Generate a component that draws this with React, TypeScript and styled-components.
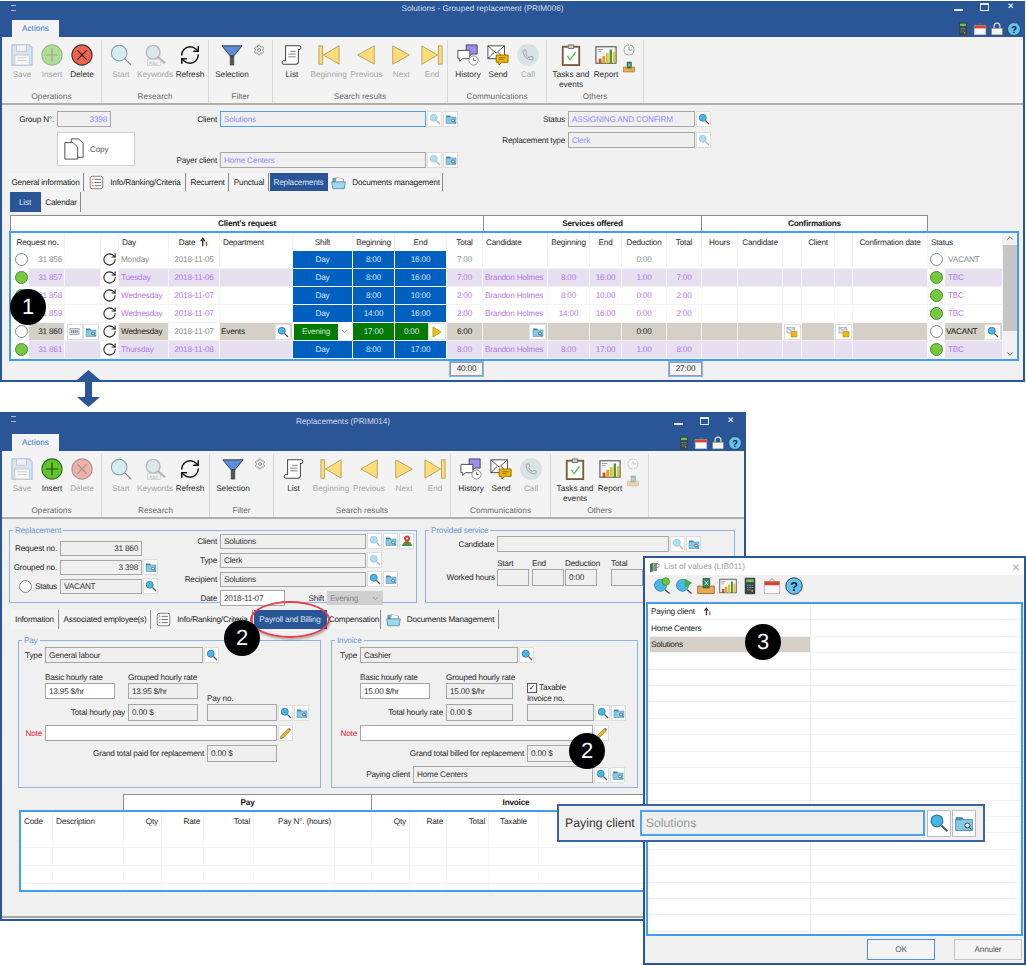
import React, { ReactNode } from "react";
import styled, { createGlobalStyle } from "styled-components";
import { ChevronDown, ChevronUp, Phone, RefreshCw, RotateCw, Settings } from "lucide-react";

const Global = createGlobalStyle`
  html, body { margin: 0; padding: 0; background: #fff; }
  body {
    font-family: "Liberation Sans", Arial, sans-serif;
    font-size: 8.2px;
    letter-spacing: -0.2px;
    text-rendering: geometricPrecision;
    color: #222;
  }
  * { box-sizing: border-box; }
`;

/* ---------- icons ---------- */
type IconProps = { s?: number; off?: boolean };

const Svg = ({ s = 14, off, children }: IconProps & { children: ReactNode }) => (
  <svg width={s} height={s} viewBox="0 0 24 24" opacity={off ? 0.45 : 1} style={{ flexShrink: 0 }}>
    {children}
  </svg>
);

const SearchIcon = (p: IconProps) => (
  <Svg {...p}>
    <circle cx="9.5" cy="9.5" r="7" fill="#48b6e6" stroke="#2c7d9e" strokeWidth="1.6" />
    <path d="M15 15l7 7" stroke="#555" strokeWidth="2.4" />
  </Svg>
);
const FolderIcon = (p: IconProps) => (
  <Svg {...p}>
    <path d="M2 5h8l2 3h10v4H2z" fill="#3f88a8" />
    <path d="M2 8h20v13H2z" fill="#86c7e6" stroke="#3f88a8" />
    <circle cx="16" cy="15" r="3" fill="#dff1f9" stroke="#345" strokeWidth="1.2" />
    <path d="M18 17l3 3" stroke="#345" strokeWidth="1.4" />
  </Svg>
);
const SaveIcon = (p: IconProps) => (
  <Svg {...p}>
    <path d="M1 1h19l3 3v19H1z" fill="#bcd0ec" stroke="#5f86c0" strokeWidth="1.2" />
    <path d="M6 1h11v7H6z" fill="#eef2f8" stroke="#7c8ea8" />
    <path d="M4 12h16v11H4z" fill="#fff" stroke="#7c8ea8" />
    <path d="M7 15h10M7 18h10" stroke="#99a" />
  </Svg>
);
const InsertIcon = (p: IconProps) => (
  <Svg {...p}>
    <circle cx="12" cy="12" r="11" fill="#62c42c" stroke="#2a6e18" strokeWidth="1.2" />
    <path d="M12 5v14M5 12h14" stroke="#1d4d10" strokeWidth="1.3" />
  </Svg>
);
const DeleteIcon = (p: IconProps) => (
  <Svg {...p}>
    <circle cx="12" cy="12" r="11" fill="#f4604c" stroke="#333" strokeWidth="1.2" />
    <path d="M7 7l10 10M17 7L7 17" stroke="#222" strokeWidth="1.3" />
  </Svg>
);
const StartIcon = (p: IconProps) => (
  <Svg {...p}>
    <circle cx="10" cy="10" r="8.5" fill="#d6ebf2" stroke="#8aa0a8" strokeWidth="1.2" />
    <path d="M16 16l7 7" stroke="#888" strokeWidth="1.4" />
  </Svg>
);
const KeywordsIcon = (p: IconProps) => (
  <Svg {...p}>
    <circle cx="10" cy="9" r="7.5" fill="#bcdbe8" stroke="#777" strokeWidth="1.6" />
    <path d="M15 14l8 7" stroke="#666" strokeWidth="2.4" />
    <rect x="4" y="17" width="14" height="6.5" fill="#eee" stroke="#999" strokeWidth=".7" />
    <text x="5.5" y="22.6" fontSize="5.5" fill="#666" fontFamily="Liberation Sans">Abc</text>
  </Svg>
);
const FunnelIcon = (p: IconProps) => (
  <Svg {...p}>
    <path d="M1 2h22l-9 11H10z" fill="#5b8ed8" stroke="#333" strokeWidth="1" />
    <path d="M10 13h4v10h-4z" fill="#555" stroke="#333" strokeWidth=".6" />
  </Svg>
);
const ListIcon = (p: IconProps) => (
  <Svg {...p}>
    <path d="M5 2h15c2 0 2.6 3 .4 4H19v13c0 2-1 3-3 3H3c-2 0-2.6-3-.6-3.6L5 18z" fill="#fff" stroke="#444" strokeWidth="1.1" />
    <path d="M10 8h6M8 11h8M8 14h8" stroke="#777" />
  </Svg>
);
const tri = { fill: "#ffdc78", stroke: "#b5a060", strokeWidth: 1 };
const BeginningIcon = (p: IconProps) => (
  <Svg {...p}>
    <rect x="1" y="2" width="4" height="20" {...tri} />
    <path d="M23 2v20L6 12z" {...tri} />
  </Svg>
);
const PreviousIcon = (p: IconProps) => (
  <Svg {...p}>
    <path d="M21 2v20L3 12z" {...tri} />
  </Svg>
);
const NextIcon = (p: IconProps) => (
  <Svg {...p}>
    <path d="M3 2v20l18-10z" {...tri} />
  </Svg>
);
const EndIcon = (p: IconProps) => (
  <Svg {...p}>
    <rect x="19" y="2" width="4" height="20" {...tri} />
    <path d="M1 2v20l17-10z" {...tri} />
  </Svg>
);
const HistoryIcon = (p: IconProps) => (
  <Svg {...p}>
    <path d="M10 1h12v10h-6l-3 3v-3h-3z" fill="#9c8cf0" stroke="#444" />
    <path d="M1 7h13v9H6l-3 3v-3H1z" fill="#fff" stroke="#444" />
    <circle cx="18" cy="18" r="5" fill="#fff" stroke="#888" />
    <path d="M18 15v3h2.5" stroke="#666" fill="none" />
  </Svg>
);
const SendIcon = (p: IconProps) => (
  <Svg {...p}>
    <rect x="1" y="2" width="18" height="14" fill="#fff" stroke="#444" />
    <path d="M1 2l9 8 9-8M1 16l7-7M19 16l-7-7" stroke="#444" fill="none" />
    <path d="M10 12h13v8h-7l-3 3v-3h-3z" fill="#f2b705" stroke="#8a6a00" />
    <path d="M13 15h7M13 17h5" stroke="#8a6a00" />
  </Svg>
);
const TasksIcon = (p: IconProps) => (
  <Svg {...p}>
    <rect x="3" y="3" width="18" height="20" fill="#fff" stroke="#7a5a3a" strokeWidth="2" />
    <path d="M9 1h6v4H9z" fill="#ccc" stroke="#666" />
    <path d="M8 13l3 4 6-8" stroke="#5cc24a" strokeWidth="1.5" fill="none" />
  </Svg>
);
const ReportIcon = (p: IconProps) => (
  <Svg {...p}>
    <rect x="1" y="3" width="22" height="18" fill="#f4f4f4" stroke="#555" strokeWidth="1.2" />
    <path d="M3 6h6M3 8h4" stroke="#999" />
    <rect x="4" y="16" width="3" height="5" fill="#c8502a" />
    <rect x="8" y="13" width="3" height="8" fill="#e59a2a" />
    <rect x="12" y="10" width="3" height="11" fill="#e5c12a" />
    <rect x="16" y="6" width="2.5" height="15" fill="#3d9a3d" />
    <rect x="19.5" y="9" width="2.5" height="12" fill="#e5c12a" />
  </Svg>
);
const ClockIcon = (p: IconProps) => (
  <Svg {...p}>
    <circle cx="12" cy="12" r="10" fill="#f6f6f6" stroke="#777" strokeDasharray="14 2" strokeWidth="1.4" />
    <path d="M12 6v6h6" stroke="#666" fill="none" strokeWidth="1.4" />
  </Svg>
);
const ExcelIcon = (p: IconProps) => (
  <Svg {...p}>
    <path d="M8 2h9v12H8z" fill="#2e8b57" stroke="#1c5a38" />
    <path d="M10 5l5 6M15 5l-5 6" stroke="#fff" />
    <path d="M1 12h5l2 3h8l2-3h5v10H1z" fill="#f0a850" stroke="#8a5a20" />
  </Svg>
);
const CalcIcon = (p: IconProps) => (
  <Svg {...p}>
    <rect x="5" y="1" width="14" height="22" rx="1" fill="#34484a" />
    <rect x="7" y="3" width="10" height="4" fill="#6fc24a" />
    <path d="M8 11h2M11 11h2M14 11h2M8 14h2M11 14h2M14 14h2M8 17h2M11 17h2" stroke="#8a9a9a" strokeWidth="1.4" />
    <path d="M14 17h2v3h-2z" fill="#e58a2a" />
  </Svg>
);
const CalendarIcon = (p: IconProps) => (
  <Svg {...p}>
    <rect x="2" y="6" width="20" height="16" fill="#f8f8f8" stroke="#aaa" />
    <path d="M2 6h20v5H2z" fill="#d9432f" />
    <path d="M8 6l4-4 4 4" stroke="#777" fill="none" />
  </Svg>
);
const LockIcon = (p: IconProps) => (
  <Svg {...p}>
    <path d="M7 11V7a5 5 0 0110 0v4" stroke="#ddd" strokeWidth="2" fill="none" />
    <rect x="3" y="11" width="18" height="11" fill="#f4f4f4" stroke="#b09a60" />
  </Svg>
);
const HelpIcon = (p: IconProps) => (
  <Svg {...p}>
    <circle cx="12" cy="12" r="11" fill="#63c3ee" stroke="#234" strokeWidth="1.2" />
    <text x="12" y="18" fontSize="17" fontWeight="700" textAnchor="middle" fill="#123" fontFamily="Liberation Sans">?</text>
  </Svg>
);
const SortIcon = (p: IconProps) => (
  <Svg {...p}>
    <path d="M9 22V7M4 10l5-7 5 7" stroke="#222" strokeWidth="3" fill="none" />
    <path d="M18 12v10" stroke="#d33" strokeWidth="3" />
  </Svg>
);
const CopyIcon = (p: IconProps) => (
  <Svg {...p}>
    <path d="M9 1h8l5 5v15H9z" fill="#fff" stroke="#444" />
    <path d="M2 5h9l5 5v13H2z" fill="#fff" stroke="#444" />
  </Svg>
);
const InfoIcon = (p: IconProps) => (
  <Svg {...p}>
    <rect x="2" y="2" width="20" height="20" rx="3" fill="#fafafa" stroke="#777" strokeWidth="1.4" />
    <path d="M5 7h2M5 12h2M5 17h2" stroke="#e08030" strokeWidth="2" />
    <path d="M9 7h10M9 12h10M9 17h10" stroke="#777" strokeWidth="1.6" />
  </Svg>
);
const DocsIcon = (p: IconProps) => (
  <Svg {...p}>
    <path d="M3 11V5h7l2 2h8v4z" fill="#5fa8c8" stroke="#3f6f88" strokeWidth=".8" />
    <path d="M7 11l2-7 10 2 1 5z" fill="#fff" stroke="#999" strokeWidth=".8" />
    <path d="M1 11h22l-2 11H3z" fill="#9ed6ee" stroke="#3f6f88" />
  </Svg>
);
const PinIcon = (p: IconProps) => (
  <Svg {...p}>
    <path d="M1 22l5-8h12l5 8z" fill="#3d9a3d" />
    <path d="M12 18C8 12 6 10 6 7a6 6 0 0112 0c0 3-2 5-6 11z" fill="#d9432f" />
    <circle cx="12" cy="7" r="2" fill="#fff" />
  </Svg>
);
const PencilIcon = (p: IconProps) => (
  <Svg {...p}>
    <path d="M4 16L17 3l4 4L8 20l-6 2z" fill="#e5b82a" stroke="#6a5a20" />
    <path d="M17 3l4 4 1-2-3-3z" fill="#d9432f" />
  </Svg>
);
const EnvLockIcon = (p: IconProps) => (
  <Svg {...p}>
    <rect x="2" y="3" width="15" height="11" fill="#dfe4ea" stroke="#889" />
    <path d="M2 3l7.500 6L17 3" stroke="#889" fill="none" />
    <rect x="10" y="11" width="12" height="11" rx="1" fill="#f2b705" stroke="#a07a00" />
  </Svg>
);
const CardIcon = (p: IconProps) => (
  <Svg {...p}>
    <rect x="2" y="5" width="20" height="14" fill="#d8dce8" stroke="#778" />
    <path d="M6 9v6M10 9v6M14 9v6M18 9v6" stroke="#556" strokeWidth="1.6" />
  </Svg>
);
const PlusGlassIcon = (p: IconProps) => (
  <Svg {...p}>
    <circle cx="10" cy="11" r="8" fill="#48b6e6" stroke="#2c7d9e" />
    <path d="M16 17l6 5" stroke="#444" strokeWidth="1.6" />
    <circle cx="17" cy="6" r="5" fill="#6cc53a" stroke="#3d8a20" />
  </Svg>
);
const FlagGlassIcon = (p: IconProps) => (
  <Svg {...p}>
    <circle cx="10" cy="11" r="8" fill="#48b6e6" stroke="#2c7d9e" />
    <path d="M16 17l6 5" stroke="#444" strokeWidth="1.6" />
    <path d="M13 2l10 6-10 6z" fill="#3fae3f" />
  </Svg>
);
const BooksIcon = (p: IconProps) => (
  <Svg {...p}>
    <path d="M2 6l7-3v17l-7 3z" fill="#3d7a5a" />
    <path d="M10 4h6v16h-6z" fill="#888" />
    <path d="M16 5c6 0 6 8 0 8" stroke="#888" strokeWidth="2" fill="none" />
  </Svg>
);
const PlayIcon = () => (
  <svg width="10" height="12" viewBox="0 0 10 12">
    <path d="M1 1v10l8-5z" fill="#f4c20d" stroke="#a08000" strokeWidth=".7" />
  </svg>
);

/* ---------- window chrome ---------- */
const Desktop = styled.div`
  position: relative;
  width: 1026px;
  height: 966px;
  overflow: hidden;
  background: #fff;
`;

const Win = styled.section<{ $x: number; $y: number; $w: number; $h: number; $z?: number }>`
  position: absolute;
  left: ${(p) => p.$x}px;
  top: ${(p) => p.$y}px;
  width: ${(p) => p.$w}px;
  height: ${(p) => p.$h}px;
  z-index: ${(p) => p.$z ?? 1};
  border: 2px solid #2a5596;
  display: flex;
  flex-direction: column;
  background: #f0f0f0;
  overflow: hidden;
`;

const TitleBar = styled.header<{ $h: number }>`
  position: relative;
  height: ${(p) => p.$h}px;
  background: #2a5596;
  display: flex;
  flex-direction: column;
  flex-shrink: 0;
`;

const TitleText = styled.div<{ $h: number }>`
  height: ${(p) => p.$h}px;
  line-height: ${(p) => p.$h}px;
  padding-right: 60px;
  text-align: center;
  letter-spacing: 0;
  color: #d4deee;
`;

const TitleTabs = styled.div`
  margin-top: auto;
  display: flex;
  align-items: flex-end;
  justify-content: space-between;
  padding: 0 2px 0 10px;
`;

const ActionsTab = styled.div`
  width: 47px;
  height: 17px;
  line-height: 17px;
  text-align: center;
  letter-spacing: 0;
  background: #f3f3f3;
  color: #2f7ad8;
`;

const QuickIcons = styled.div`
  display: flex;
  gap: 3px;
  margin-bottom: 1px;
`;

const WinButtons = styled.div<{ $top: number; $right: number }>`
  position: absolute;
  right: ${(p) => p.$right}px;
  top: ${(p) => p.$top}px;
  display: flex;
  gap: 17px;
  height: 7px;
  align-items: center;
`;

const WinGlyph = styled.span<{ $kind: "min" | "max" | "close" }>`
  width: 9px;
  height: 8px;
  position: relative;
  display: block;
  ${(p) => p.$kind === "min" && "border-bottom: 2px solid #e4eaf4; height: 6px; margin-top: 3px;"}
  ${(p) => p.$kind === "max" && "border: 1px solid #e4eaf4; border-top-width: 2px;"}
  ${(p) => p.$kind === "close" && "color: #e4eaf4; font-size: 10px; line-height: 8px; font-weight: 700; text-align: center;"}
`;

const TitleBars = styled.div`
  position: absolute;
  left: 9px;
  top: 2px;
  width: 5px;
  height: 6px;
  border-top: 1px solid #a9bad4;
  border-bottom: 1px solid #a9bad4;
`;

type ChromeProps = { title: string; titleH: number; textH: number; btnTop: number; btnRight: number };

const Chrome = ({ title, titleH, textH, btnTop, btnRight }: ChromeProps) => (
  <TitleBar $h={titleH}>
    <TitleBars />
    <TitleText $h={textH}>{title}</TitleText>
    <WinButtons $top={btnTop} $right={btnRight}>
      <WinGlyph $kind="min" />
      <WinGlyph $kind="max" />
      <WinGlyph $kind="close">×</WinGlyph>
    </WinButtons>
    <TitleTabs>
      <ActionsTab>Actions</ActionsTab>
      <QuickIcons>
        <CalcIcon s={14} />
        <CalendarIcon s={14} />
        <LockIcon s={14} />
        <HelpIcon s={14} />
      </QuickIcons>
    </TitleTabs>
  </TitleBar>
);

/* ---------- ribbon ---------- */
const RibbonBar = styled.div`
  height: 68px;
  flex-shrink: 0;
  display: flex;
  letter-spacing: 0;
  background: #f3f3f3;
  border-bottom: 2px solid #aeaeae;
`;

const Group = styled.div<{ $w: number; $pad: number }>`
  width: ${(p) => p.$w}px;
  height: 63px;
  margin-top: 3px;
  padding-left: ${(p) => p.$pad}px;
  border-right: 1px solid #d9d9d9;
  display: flex;
  flex-direction: column;
`;

const GroupItems = styled.div`
  height: 51px;
  padding-top: 4px;
  display: flex;
`;

const GroupTitle = styled.div<{ $pad: number }>`
  margin-left: -${(p) => p.$pad}px;
  text-align: center;
  height: 12px;
  line-height: 12px;
  color: #6b6b6b;
`;

const RibbonBtn = styled.div<{ $w: number; $off?: boolean }>`
  width: ${(p) => p.$w}px;
  display: flex;
  flex-direction: column;
  align-items: center;
  text-align: center;
  white-space: nowrap;
  color: ${(p) => (p.$off ? "#a6a6a6" : "#2c2c2c")};
  line-height: 9.5px;
  & > span {
    margin-top: 4px;
  }
`;

const SmallCol = styled.div<{ $ml?: number }>`
  width: 16px;
  margin-left: ${(p) => p.$ml ?? 0}px;
  display: flex;
  flex-direction: column;
  align-items: center;
  gap: 5px;
  color: #6f7b80;
`;

const CallBadge = styled.div`
  width: 22px;
  height: 22px;
  border-radius: 50%;
  background: #d8e4e4;
  display: flex;
  align-items: center;
  justify-content: center;
`;

const Ribbon = ({ second }: { second?: boolean }) => {
  const b = (label: ReactNode, icon: ReactNode, w: number, off?: boolean) => (
    <RibbonBtn $w={w} $off={off}>
      {icon}
      <span>{label}</span>
    </RibbonBtn>
  );
  return (
    <RibbonBar>
      <Group $w={100} $pad={5}>
        <GroupItems>
          {b("Save", <SaveIcon s={22} off />, 30, true)}
          {b("Insert", <InsertIcon s={22} off={!second} />, 30, !second)}
          {b("Delete", <DeleteIcon s={22} off={second} />, 30, second)}
        </GroupItems>
        <GroupTitle $pad={5}>Operations</GroupTitle>
      </Group>
      <Group $w={second ? 108 : 107} $pad={2}>
        <GroupItems>
          {b("Start", <StartIcon s={22} />, 34, true)}
          {b("Keywords", <KeywordsIcon s={22} off />, 34, true)}
          {b("Refresh", <RefreshCw size={22} strokeWidth={1.6} color="#111" />, 36)}
        </GroupItems>
        <GroupTitle $pad={2}>Research</GroupTitle>
      </Group>
      <Group $w={64} $pad={0}>
        <GroupItems>
          {b("Selection", <FunnelIcon s={22} />, 46)}
          <SmallCol $ml={-4}>
            <Settings size={12} strokeWidth={1.6} />
          </SmallCol>
        </GroupItems>
        <GroupTitle $pad={0}>Filter</GroupTitle>
      </Group>
      <Group $w={second ? 177 : 175} $pad={1}>
        <GroupItems>
          {b("List", <ListIcon s={22} />, second ? 37 : 36)}
          {b("Beginning", <BeginningIcon s={22} />, 38, true)}
          {b("Previous", <PreviousIcon s={22} />, 38, true)}
          {b("Next", <NextIcon s={22} />, 32, true)}
          {b("End", <EndIcon s={22} />, 30, true)}
        </GroupItems>
        <GroupTitle $pad={1}>Search results</GroupTitle>
      </Group>
      <Group $w={second ? 100 : 99} $pad={5}>
        <GroupItems>
          {b("History", <HistoryIcon s={22} />, 30)}
          {b("Send", <SendIcon s={22} />, 30)}
          {b("Call", <CallBadge><Phone size={12} strokeWidth={1.4} color="#7c8c8c" /></CallBadge>, 30, true)}
        </GroupItems>
        <GroupTitle $pad={5}>Communications</GroupTitle>
      </Group>
      <Group $w={second ? 98 : 97} $pad={4}>
        <GroupItems>
          {b(<>Tasks and<br />events</>, <TasksIcon s={22} />, 40)}
          {b("Report", <ReportIcon s={22} />, 30)}
          <SmallCol>
            <ClockIcon s={12} off={second} />
            <ExcelIcon s={12} off={second} />
          </SmallCol>
        </GroupItems>
        <GroupTitle $pad={4}>Others</GroupTitle>
      </Group>
    </RibbonBar>
  );
};

/* ---------- form parts ---------- */
const Body = styled.div<{ $top: number }>`
  flex: 1;
  padding-top: ${(p) => p.$top}px;
  display: flex;
  flex-direction: column;
  overflow: hidden;
  min-height: 0;
`;

const FormRow = styled.div`
  display: flex;
  align-items: flex-start;
`;

const Col = styled.div<{ $w?: number }>`
  ${(p) => p.$w && `width: ${p.$w}px;`}
  display: flex;
  flex-direction: column;
  flex-shrink: 0;
`;

const Line = styled.div<{ $mt?: number; $ml?: number; $gap?: number }>`
  display: flex;
  align-items: center;
  margin-top: ${(p) => p.$mt ?? 0}px;
  margin-left: ${(p) => p.$ml ?? 0}px;
  gap: ${(p) => p.$gap ?? 1}px;
`;

const Lbl = styled.label<{ $w: number; $red?: boolean }>`
  width: ${(p) => p.$w}px;
  margin-right: 2px;
  text-align: right;
  white-space: nowrap;
  flex-shrink: 0;
  color: ${(p) => (p.$red ? "#f0203a" : "#2a2a2a")};
`;

const Fld = styled.div<{ $w: number; $h?: number; $white?: boolean; $focus?: boolean; $ink?: string; $right?: boolean }>`
  width: ${(p) => p.$w}px;
  height: ${(p) => p.$h ?? 16}px;
  flex-shrink: 0;
  padding: 0 3px;
  display: flex;
  align-items: center;
  justify-content: ${(p) => (p.$right ? "flex-end" : "flex-start")};
  white-space: nowrap;
  overflow: hidden;
  background: ${(p) => (p.$white ? "#fff" : "#efefef")};
  border: ${(p) => (p.$focus ? "1.6px solid #4aa3f0" : "1.6px solid #a6a6a6")};
  color: ${(p) => p.$ink ?? "#333"};
`;

const IconBtn = styled.div<{ $w?: number; $h?: number }>`
  width: ${(p) => p.$w ?? 15}px;
  height: ${(p) => p.$h ?? 16}px;
  flex-shrink: 0;
  display: flex;
  align-items: center;
  justify-content: center;
  background: #fff;
  border: 1px solid #ddd;
`;

const Find = ({ off, mute }: { off?: boolean; mute?: boolean }) => (
  <IconBtn>
    <SearchIcon s={12} off={off || mute} />
  </IconBtn>
);
const Browse = () => (
  <IconBtn>
    <FolderIcon s={12} />
  </IconBtn>
);

const CopyBtn = styled.div`
  width: 78px;
  height: 34px;
  margin-top: 5px;
  margin-left: 55px;
  display: flex;
  align-items: center;
  gap: 5px;
  padding-left: 5px;
  background: #fff;
  border: 1px solid #d0d0d0;
  color: #555;
`;

const Tabs = styled.nav<{ $mt?: number; $ml: number; $h: number }>`
  display: flex;
  gap: 1px;
  margin-top: ${(p) => p.$mt ?? 0}px;
  margin-left: ${(p) => p.$ml}px;
  height: ${(p) => p.$h}px;
  flex-shrink: 0;
`;

const Tab = styled.div<{ $w: number; $on?: boolean }>`
  width: ${(p) => p.$w}px;
  display: flex;
  align-items: center;
  justify-content: center;
  gap: 6px;
  white-space: nowrap;
  background: ${(p) => (p.$on ? "#2a5596" : "#f4f4f4")};
  color: ${(p) => (p.$on ? "#dde6f4" : "#222")};
  border-right: 1px solid ${(p) => (p.$on ? "#2a5596" : "#8a8a8a")};
`;

/* ---------- tables ---------- */
const GroupHead = styled.div<{ $ml: number; $cols: string }>`
  display: grid;
  grid-template-columns: ${(p) => p.$cols};
  margin-left: ${(p) => p.$ml}px;
  height: 16px;
  flex-shrink: 0;
`;

const GroupCell = styled.div`
  background: #fff;
  border: 1px solid #8c8c8c;
  border-bottom: none;
  border-right-width: 0;
  &:last-child {
    border-right-width: 1px;
  }
  font-weight: 700;
  text-align: center;
  line-height: 15px;
  color: #111;
`;

const TableBox = styled.div<{ $ml: number; $w: number; $h: number }>`
  margin-left: ${(p) => p.$ml}px;
  width: ${(p) => p.$w}px;
  height: ${(p) => p.$h}px;
  flex-shrink: 0;
  border: 2px solid #429df0;
  background: #fff;
  display: flex;
  overflow: hidden;
`;

const Rows = styled.div<{ $cols: string }>`
  display: grid;
  grid-template-columns: ${(p) => p.$cols};
  grid-auto-rows: 18px;
  align-content: start;
`;

const Head = styled.div<{ $al?: string; $span?: number }>`
  ${(p) => p.$span && `grid-column: span ${p.$span};`}
  display: flex;
  align-items: center;
  justify-content: ${(p) => p.$al ?? "center"};
  gap: 4px;
  padding: 0 3px;
  white-space: nowrap;
  border-right: 1px solid #f0f0f0;
  color: #2a2a2a;
`;

const Cell = styled.div<{ $bg?: string; $fg?: string; $al?: string; $pr?: number }>`
  display: flex;
  align-items: center;
  justify-content: ${(p) => p.$al ?? "center"};
  padding: 0 ${(p) => p.$pr ?? 2}px;
  white-space: nowrap;
  overflow: hidden;
  background: ${(p) => p.$bg ?? "#fff"};
  color: ${(p) => p.$fg ?? "#8a8a8a"};
  border-right: 1px solid #f6f6f6;
  border-bottom: 1px solid #f3f3f3;
`;

const TimeCell = styled(Cell)`
  background: ${(p) => p.$bg ?? "#0060c0"};
  color: #d8e6f8;
  border: 1px solid #fff;
  border-width: 0 1px 1px 0;
`;

const Dot = styled.span<{ $on?: boolean }>`
  width: 13px;
  height: 13px;
  border-radius: 50%;
  display: block;
  flex-shrink: 0;
  background: ${(p) => (p.$on ? "#74c93c" : "#fff")};
  border: 1px solid ${(p) => (p.$on ? "#4c8a3c" : "#888")};
`;

const Scroll = styled.div`
  width: 14px;
  flex-shrink: 0;
  background: #f1f1f1;
  display: flex;
  flex-direction: column;
  align-items: center;
  color: #444;
`;

const Thumb = styled.div`
  width: 100%;
  height: 86px;
  margin-top: 2px;
  margin-bottom: auto;
  background: #c6c6c6;
`;

const SumRow = styled.div`
  height: 16px;
  flex-shrink: 0;
  display: flex;
  align-items: center;
`;

const SumBox = styled.div<{ $ml: number }>`
  width: 33px;
  height: 14px;
  margin-left: ${(p) => p.$ml}px;
  text-align: center;
  line-height: 11px;
  background: #f4f4f4;
  border: 1.6px solid #9a9a9a;
  outline: 1px solid #7fb8ee;
  color: #333;
`;

/* ---------- window one data ---------- */
const mainCols = "18px 36px 36px 18px 50px 51px 73px 60px 42px 52px 36px 65px 42px 32px 45px 35px 36px 45px 19px 33px 18px 75px 17px 58px";

type Tone = "grey" | "alt" | "plain";
const tones: Record<Tone, { bg: string; fg: string }> = {
  grey: { bg: "#fff", fg: "#8c8c8c" },
  alt: { bg: "#e6e0f1", fg: "#b57ae6" },
  plain: { bg: "#fff", fg: "#b57ae6" },
};

type Req = {
  tone: Tone; no: string; day: string; date: string; begin: string; end: string; total: string;
  cand?: string; b2?: string; e2?: string; ded: string; t2?: string; status: string;
};

const requests: Req[] = [
  { tone: "grey", no: "31 856", day: "Monday", date: "2018-11-05", begin: "8:00", end: "16:00", total: "7:00", ded: "0:00", status: "VACANT" },
  { tone: "alt", no: "31 857", day: "Tuesday", date: "2018-11-06", begin: "8:00", end: "16:00", total: "7:00", cand: "Brandon Holmes", b2: "8:00", e2: "16:00", ded: "1:00", t2: "7:00", status: "TBC" },
  { tone: "plain", no: "31 858", day: "Wednesday", date: "2018-11-07", begin: "8:00", end: "10:00", total: "2:00", cand: "Brandon Holmes", b2: "8:00", e2: "10:00", ded: "0:00", t2: "2:00", status: "TBC" },
  { tone: "plain", no: "31 859", day: "Wednesday", date: "2018-11-07", begin: "14:00", end: "16:00", total: "2:00", cand: "Brandon Holmes", b2: "14:00", e2: "16:00", ded: "0:00", t2: "2:00", status: "TBC" },
];
const lastRequest: Req = { tone: "alt", no: "31 861", day: "Thursday", date: "2018-11-08", begin: "8:00", end: "17:00", total: "8:00", cand: "Brandon Holmes", b2: "8:00", e2: "17:00", ded: "1:00", t2: "8:00", status: "TBC" };

const RowSpin = () => <RotateCw size={15} strokeWidth={1.7} color="#222" />;

const RequestRow = ({ r }: { r: Req }) => {
  const t = tones[r.tone];
  const c = (text?: string, al?: string) => (
    <Cell $bg={t.bg} $fg={t.fg} $al={al}>{text}</Cell>
  );
  const on = r.status !== "VACANT";
  return (
    <>
      <Cell $al="flex-end" $pr={0}><Dot $on={on} /></Cell>
      {c(r.no, "flex-end")}
      {c()}
      <Cell $pr={0}><RowSpin /></Cell>
      {c(r.day, "flex-start")}
      {c(r.date)}
      {c()}
      <TimeCell>Day</TimeCell>
      <TimeCell>{r.begin}</TimeCell>
      <TimeCell>{r.end}</TimeCell>
      {c(r.total)}
      {c(r.cand, "flex-start")}
      {c(r.b2)}
      {c(r.e2)}
      {c(r.ded)}
      {c(r.t2)}
      {c()}{c()}{c()}{c()}{c()}{c()}
      <Cell><Dot $on={on} /></Cell>
      <Cell $bg={t.bg} $fg={on ? "#b57ae6" : "#8c8c8c"} $al="flex-start" $pr={3}>{r.status}</Cell>
    </>
  );
};

const SEL = "#d4d0c8";

const SelectBox = styled.div`
  width: 100%;
  height: 16px;
  display: flex;
  align-items: center;
  background: #fff;
`;

const EveningTag = styled.div`
  flex: 1;
  height: 100%;
  text-align: center;
  line-height: 15px;
  background: #007a00;
  color: #cfe8cf;
`;

const EndTag = styled.div`
  flex: 1;
  height: 100%;
  text-align: center;
  line-height: 17px;
  background: #007a00;
  color: #d8e6f8;
`;

const SelectedRow = () => {
  const c = (text?: ReactNode, al?: string) => (
    <Cell $bg={SEL} $fg="#222" $al={al}>{text}</Cell>
  );
  return (
    <>
      <Cell $al="flex-end" $pr={0}><Dot /></Cell>
      {c("31 860", "flex-end")}
      <Cell $pr={1}>
        <IconBtn $w={16}><CardIcon s={11} /></IconBtn>
        <IconBtn $w={16}><FolderIcon s={12} /></IconBtn>
      </Cell>
      <Cell $pr={0}><RowSpin /></Cell>
      {c("Wednesday", "flex-start")}
      <Cell>2018-11-07</Cell>
      <Cell $bg={SEL} $fg="#222" $al="space-between" $pr={1}>
        Events
        <IconBtn $w={16}><SearchIcon s={12} /></IconBtn>
      </Cell>
      <Cell $pr={1}>
        <SelectBox>
          <EveningTag>Evening</EveningTag>
          <ChevronDown size={9} color="#555" style={{ margin: "0 2px" }} />
        </SelectBox>
      </Cell>
      <TimeCell $bg="#007a00">17:00</TimeCell>
      <TimeCell $bg="#fff" $al="space-between" $pr={0}>
        <EndTag>0:00</EndTag>
        <IconBtn $w={18} $h={17}><PlayIcon /></IconBtn>
      </TimeCell>
      {c("6:00")}
      <Cell $bg={SEL} $al="flex-end" $pr={1}>
        <IconBtn $w={17}><FolderIcon s={12} /></IconBtn>
      </Cell>
      {c()}{c()}
      {c("0:00")}
      {c()}{c()}{c()}
      <Cell $pr={1}><IconBtn $w={17}><EnvLockIcon s={12} /></IconBtn></Cell>
      {c()}
      <Cell $pr={1}><IconBtn $w={17}><EnvLockIcon s={12} /></IconBtn></Cell>
      {c()}
      <Cell><Dot /></Cell>
      <Cell $bg={SEL} $fg="#111" $al="space-between" $pr={1}>
        VACANT
        <IconBtn $w={17}><SearchIcon s={12} /></IconBtn>
      </Cell>
    </>
  );
};

const WindowOne = () => (
  <Win $x={0} $y={1} $w={1025} $h={381}>
    <Chrome title="Solutions - Grouped replacement (PRIM006)" titleH={34} textH={11} btnTop={0} btnRight={8} />
    <Ribbon />
    <Body $top={6}>
      <FormRow style={{ height: 62 }}>
        <Col $w={148}>
          <Line>
            <Lbl $w={52}>Group N°.</Lbl>
            <Fld $w={54} $right $ink="#8f8ff8">3398</Fld>
          </Line>
          <CopyBtn><CopyIcon s={22} />Copy</CopyBtn>
        </Col>
        <Col $w={320}>
          <Line>
            <Lbl $w={67}>Client</Lbl>
            <Fld $w={206} $focus $ink="#8f8ff8">Solutions</Fld>
            <Find mute />
            <Browse />
          </Line>
          <Line $mt={25}>
            <Lbl $w={67}>Payer client</Lbl>
            <Fld $w={206} $ink="#8f8ff8">Home Centers</Fld>
            <Find mute />
            <Browse />
          </Line>
        </Col>
        <Col>
          <Line>
            <Lbl $w={95}>Status</Lbl>
            <Fld $w={127} $ink="#8f8ff8">ASSIGNING AND CONFIRM</Fld>
            <Find />
          </Line>
          <Line $mt={5}>
            <Lbl $w={95}>Replacement type</Lbl>
            <Fld $w={127} $ink="#8f8ff8">Clerk</Fld>
            <Find mute />
          </Line>
        </Col>
      </FormRow>
      <Tabs $ml={6} $h={18}>
        <Tab $w={76}>General information</Tab>
        <Tab $w={101}><InfoIcon s={15} />Info/Ranking/Criteria</Tab>
        <Tab $w={42}>Recurrent</Tab>
        <Tab $w={39}>Punctual</Tab>
        <Tab $w={58} $on>Replacements</Tab>
        <Tab $w={114}><DocsIcon s={15} />Documents management</Tab>
      </Tabs>
      <Tabs $ml={8} $h={20} $mt={1}>
        <Tab $w={31} $on>List</Tab>
        <Tab $w={39}>Calendar</Tab>
      </Tabs>
      <GroupHead $ml={8} $cols="473px 218px 227px" style={{ marginTop: 3 }}>
        <GroupCell>Client's request</GroupCell>
        <GroupCell>Services offered</GroupCell>
        <GroupCell>Confirmations</GroupCell>
      </GroupHead>
      <TableBox $ml={7} $w={1010} $h={130}>
        <Rows $cols={mainCols}>
          <Head $span={2}>Request no.</Head>
          <Head /><Head />
          <Head $al="flex-start">Day</Head>
          <Head>Date <SortIcon s={10} /></Head>
          <Head $al="flex-start">Department</Head>
          <Head>Shift</Head>
          <Head>Beginning</Head>
          <Head>End</Head>
          <Head>Total</Head>
          <Head $al="flex-start">Candidate</Head>
          <Head>Beginning</Head>
          <Head>End</Head>
          <Head>Deduction</Head>
          <Head>Total</Head>
          <Head>Hours</Head>
          <Head>Candidate</Head>
          <Head />
          <Head>Client</Head>
          <Head />
          <Head>Confirmation date</Head>
          <Head $span={2} $al="flex-start">Status</Head>
          {requests.map((r) => <RequestRow key={r.no} r={r} />)}
          <SelectedRow />
          <RequestRow r={lastRequest} />
        </Rows>
        <Scroll>
          <ChevronUp size={10} />
          <Thumb />
          <ChevronDown size={10} />
        </Scroll>
      </TableBox>
      <SumRow>
        <SumBox $ml={448}>40:00</SumBox>
        <SumBox $ml={186}>27:00</SumBox>
      </SumRow>
    </Body>
  </Win>
);

/* ---------- window two ---------- */
const FieldBox = styled.div<{ $w: number; $h: number; $pt?: number; $row?: boolean }>`
  position: relative;
  width: ${(p) => p.$w}px;
  height: ${(p) => p.$h}px;
  flex-shrink: 0;
  padding-top: ${(p) => p.$pt ?? 0}px;
  border: 1px solid #8fb4e4;
  display: flex;
  flex-direction: ${(p) => (p.$row ? "row" : "column")};
  align-items: flex-start;
`;

const Legend = styled.span`
  position: absolute;
  left: 3px;
  top: -5px;
  padding: 0 2px;
  line-height: 9px;
  background: #f0f0f0;
  color: #6a9ad8;
`;

const BoxRow = styled.div<{ $ml: number; $gap: number; $mt: number }>`
  display: flex;
  gap: ${(p) => p.$gap}px;
  margin-left: ${(p) => p.$ml}px;
  margin-top: ${(p) => p.$mt}px;
  flex-shrink: 0;
`;

const Stack = styled.div<{ $ml?: number }>`
  display: flex;
  flex-direction: column;
  margin-left: ${(p) => p.$ml ?? 0}px;
  flex-shrink: 0;
`;

const Cap = styled.span`
  line-height: 10px;
  white-space: nowrap;
  color: #2a2a2a;
`;

const StatusMark = styled.div`
  width: 47px;
  margin-right: 2px;
  display: flex;
  align-items: center;
  justify-content: flex-end;
  gap: 3px;
`;

const MutedSelect = styled.div`
  width: 56px;
  height: 14px;
  padding: 0 3px;
  display: flex;
  align-items: center;
  justify-content: space-between;
  background: #cfcfcf;
  color: #888;
`;

const Tick = styled.span`
  width: 10px;
  height: 10px;
  display: flex;
  align-items: center;
  justify-content: center;
  border: 1px solid #555;
  background: #fafafa;
  font-size: 8px;
  line-height: 8px;
  color: #222;
`;

const PayBlock = ({ invoice }: { invoice?: boolean }) => {
  const lw = invoice ? 25 : 23;
  const ml = invoice ? 28 : 26;
  return (
    <FieldBox $w={invoice ? 307 : 303} $h={148} $pt={6}>
      <Legend>{invoice ? "Invoice" : "Pay"}</Legend>
      <Line>
        <Lbl $w={lw}>Type</Lbl>
        <Fld $w={158} $h={16}>{invoice ? "Cashier" : "General labour"}</Fld>
        <Find />
      </Line>
      <FormRow style={{ marginTop: 10, alignItems: "flex-end" }}>
        <Col $w={invoice ? 181 : 179}>
          <BoxRow $ml={ml} $gap={invoice ? 16 : 13} $mt={0}>
            <Stack>
              <Cap>Basic hourly rate</Cap>
              <Fld $w={70} $white>{invoice ? "15.00 $/hr" : "13.95 $/hr"}</Fld>
            </Stack>
            <Stack>
              <Cap>Grouped hourly rate</Cap>
              <Fld $w={invoice ? 67 : 70}>{invoice ? "15.00 $/hr" : "13.95 $/hr"}</Fld>
            </Stack>
          </BoxRow>
          <Line $mt={5}>
            <Lbl $w={invoice ? 111 : 106}>{invoice ? "Total hourly rate" : "Total hourly pay"}</Lbl>
            <Fld $w={invoice ? 67 : 70} $h={17}>0.00 $</Fld>
          </Line>
        </Col>
        <Stack $ml={invoice ? 14 : 9}>
          {invoice && (
            <Line $gap={2} style={{ marginBottom: 1 }}>
              <Tick>✓</Tick>
              <Cap>Taxable</Cap>
            </Line>
          )}
          <Cap>{invoice ? "Invoice no." : "Pay no."}</Cap>
          <Line>
            <Fld $w={invoice ? 67 : 70} $h={17} />
            <Find />
            <Browse />
          </Line>
        </Stack>
      </FormRow>
      <Line $mt={4}>
        <Lbl $w={lw} $red>Note</Lbl>
        <Fld $w={invoice ? 233 : 232} $white />
        <IconBtn><PencilIcon s={13} /></IconBtn>
      </Line>
      <Line $mt={4}>
        <Lbl $w={invoice ? 192 : 185}>{invoice ? "Grand total billed for replacement" : "Grand total paid for replacement"}</Lbl>
        <Fld $w={invoice ? 67 : 70} $h={17}>0.00 $</Fld>
      </Line>
      {invoice && (
        <Line $mt={4}>
          <Lbl $w={78}>Paying client</Lbl>
          <Fld $w={180} $h={17}>Home Centers</Fld>
          <Find />
          <Browse />
        </Line>
      )}
    </FieldBox>
  );
};

const subCols = "32px 71px 38px 42px 50px 81px 37px 38px 37px 42px 50px 1fr";

const WinFoot = styled.div`
  margin-top: auto;
  height: 3px;
  flex-shrink: 0;
  border-top: 2px solid #a8a8a8;
`;

const WindowTwo = () => (
  <Win $x={0} $y={412} $w={746} $h={509} $z={2}>
    <Chrome title="Replacements (PRIM014)" titleH={37} textH={16} btnTop={3} btnRight={9} />
    <Ribbon second />
    <Body $top={11}>
      <FormRow style={{ marginLeft: 7, gap: 8 }}>
        <FieldBox $w={408} $h={73} $pt={2} $row>
          <Legend>Replacement</Legend>
          <Col $w={160} style={{ marginTop: 8, gap: 3 }}>
            <Line><Lbl $w={47}>Request no.</Lbl><Fld $w={82} $h={15} $right>31 860</Fld></Line>
            <Line $gap={1}><Lbl $w={47}>Grouped no.</Lbl><Fld $w={82} $h={15} $right>3 398</Fld><Browse /></Line>
            <Line>
              <StatusMark><Dot />Status</StatusMark>
              <Fld $w={82} $h={15}>VACANT</Fld>
              <Find />
            </Line>
          </Col>
          <Col style={{ gap: 3 }}>
            <Line><Lbl $w={47}>Client</Lbl><Fld $w={146} $h={15}>Solutions</Fld><Find mute /><Browse /><IconBtn><PinIcon s={12} /></IconBtn></Line>
            <Line><Lbl $w={47}>Type</Lbl><Fld $w={146} $h={15}>Clerk</Fld><Find mute /></Line>
            <Line><Lbl $w={47}>Recipient</Lbl><Fld $w={146} $h={15}>Solutions</Fld><Find /><Browse /></Line>
            <Line>
              <Lbl $w={47}>Date</Lbl>
              <Fld $w={65} $white>2018-11-07</Fld>
              <Lbl $w={38}>Shift</Lbl>
              <MutedSelect>Evening<ChevronDown size={9} /></MutedSelect>
            </Line>
          </Col>
        </FieldBox>
        <FieldBox $w={310} $h={73} $pt={5}>
          <Legend>Provided service</Legend>
          <Line>
            <Lbl $w={68}>Candidate</Lbl>
            <Fld $w={172} />
            <Find mute />
            <Browse />
          </Line>
          <FormRow style={{ marginTop: 7, alignItems: "flex-end" }}>
            <Lbl $w={69} style={{ lineHeight: "17px" }}>Worked hours</Lbl>
            <Stack><Cap>Start</Cap><Fld $w={32} $h={17} /></Stack>
            <Stack $ml={3}><Cap>End</Cap><Fld $w={32} $h={17} /></Stack>
            <Stack $ml={1}><Cap>Deduction</Cap><Fld $w={32} $h={17}>0:00</Fld></Stack>
            <Stack $ml={11}><Cap>Total</Cap><Fld $w={32} $h={17} /></Stack>
          </FormRow>
        </FieldBox>
      </FormRow>
      <Tabs $ml={9} $h={19} $mt={7}>
        <Tab $w={48}>Information</Tab>
        <Tab $w={91}>Associated employee(s)</Tab>
        <Tab $w={101}><InfoIcon s={15} />Info/Ranking/Criteria</Tab>
        <Tab $w={73} $on>Payroll and Billing</Tab>
        <Tab $w={53}>Compensation</Tab>
        <Tab $w={117}><DocsIcon s={15} />Documents Management</Tab>
      </Tabs>
      <FormRow style={{ marginLeft: 16, marginTop: 11, gap: 10 }}>
        <PayBlock />
        <PayBlock invoice />
      </FormRow>
      <GroupHead $ml={121} $cols="248px 290px" style={{ marginTop: 6 }}>
        <GroupCell>Pay</GroupCell>
        <GroupCell>Invoice</GroupCell>
      </GroupHead>
      <TableBox $ml={17} $w={640} $h={82}>
        <Rows $cols={subCols} style={{ flex: 1 }}>
          <Head $al="flex-start">Code</Head>
          <Head $al="flex-start">Description</Head>
          <Head $al="flex-end">Qty</Head>
          <Head $al="flex-end">Rate</Head>
          <Head $al="flex-end">Total</Head>
          <Head $al="flex-end">Pay N°. (hours)</Head>
          <Head />
          <Head $al="flex-end">Qty</Head>
          <Head $al="flex-end">Rate</Head>
          <Head $al="flex-end">Total</Head>
          <Head>Taxable</Head>
          <Head />
          {Array.from({ length: 48 }, (_, i) => <Cell key={i} />)}
        </Rows>
      </TableBox>
      <WinFoot />
    </Body>
  </Win>
);

/* ---------- list of values ---------- */
const DialogTitle = styled.div`
  height: 17px;
  flex-shrink: 0;
  display: flex;
  align-items: center;
  gap: 3px;
  padding: 0 4px;
  letter-spacing: 0;
  background: #fff;
  color: #9a9a9a;
`;

const DialogClose = styled.span`
  margin-left: auto;
  font-size: 14px;
  line-height: 14px;
  color: #aaa;
`;

const DialogTools = styled.div`
  height: 27px;
  flex-shrink: 0;
  padding: 0 0 5px 8px;
  display: flex;
  align-items: center;
  gap: 4px;
  background: #f0f0f0;
`;

const ListBox = styled.div`
  flex: 1;
  min-height: 0;
  margin: 0 1px;
  border: 2px solid #429df0;
  background: #fff;
  overflow: hidden;
`;

const ListLine = styled.div`
  display: grid;
  grid-template-columns: 163px 1fr;
  height: 16.4px;
  border-bottom: 1px solid #f1f1f1;
`;

const ListCell = styled.div<{ $sel?: boolean }>`
  display: flex;
  align-items: center;
  gap: 8px;
  margin-left: 2px;
  padding-left: 1px;
  border-right: 1px solid #eee;
  white-space: nowrap;
  background: ${(p) => (p.$sel ? SEL : "transparent")};
  color: #222;
`;

const DialogFoot = styled.footer`
  height: 27px;
  flex-shrink: 0;
  padding-right: 2px;
  display: flex;
  align-items: center;
  justify-content: flex-end;
  gap: 19px;
`;

const FootBtn = styled.div<{ $primary?: boolean }>`
  width: 68px;
  height: 21px;
  line-height: 19px;
  text-align: center;
  background: #f4f4f4;
  border: 1px solid ${(p) => (p.$primary ? "#4a90dc" : "#c4c4c4")};
  color: #555;
`;

const WindowThree = () => (
  <Win $x={643} $y={556} $w={383} $h={409} $z={3}>
    <DialogTitle>
      <BooksIcon s={12} />
      List of values (LIB011)
      <DialogClose>×</DialogClose>
    </DialogTitle>
    <DialogTools>
      <PlusGlassIcon s={18} />
      <FlagGlassIcon s={18} />
      <ExcelIcon s={18} />
      <ReportIcon s={18} />
      <CalcIcon s={18} />
      <CalendarIcon s={18} />
      <HelpIcon s={18} />
    </DialogTools>
    <ListBox>
      <ListLine>
        <ListCell>Paying client <SortIcon s={9} /></ListCell>
        <ListCell />
      </ListLine>
      <ListLine><ListCell>Home Centers</ListCell><ListCell /></ListLine>
      <ListLine><ListCell $sel>Solutions</ListCell><ListCell /></ListLine>
      {Array.from({ length: 18 }, (_, i) => (
        <ListLine key={i}><ListCell /><ListCell /></ListLine>
      ))}
    </ListBox>
    <DialogFoot>
      <FootBtn $primary>OK</FootBtn>
      <FootBtn>Annuler</FootBtn>
    </DialogFoot>
  </Win>
);

/* ---------- overlays ---------- */
const Callout = styled.aside`
  position: absolute;
  left: 557px;
  top: 804px;
  width: 428px;
  height: 38px;
  z-index: 6;
  padding-left: 6px;
  display: flex;
  align-items: center;
  background: #f0f0f0;
  border: 2px solid #3a62a8;
  font-size: 12.3px;
  letter-spacing: 0;
  color: #333;
`;

const CalloutField = styled.div`
  width: 285px;
  height: 26px;
  margin: 0 2px 0 5px;
  padding-left: 4px;
  display: flex;
  align-items: center;
  background: #efefef;
  border: 2px solid #4aa3f0;
  color: #9a9a9a;
`;

const CalloutBtn = styled.div`
  width: 24px;
  height: 27px;
  margin-right: 1px;
  display: flex;
  align-items: center;
  justify-content: center;
  background: #fff;
  border: 1px solid #bbb;
`;

const Badge = styled.div<{ $x: number; $y: number }>`
  position: absolute;
  left: ${(p) => p.$x - 18}px;
  top: ${(p) => p.$y - 18}px;
  width: 36px;
  height: 36px;
  z-index: 8;
  border-radius: 50%;
  background: #000;
  color: #fff;
  font-size: 22px;
  letter-spacing: 0;
  line-height: 36px;
  text-align: center;
`;

const RedRing = styled.div`
  position: absolute;
  left: 250px;
  top: 601px;
  width: 80px;
  height: 37px;
  z-index: 7;
  border: 2px solid #e5404a;
  border-radius: 50%;
  box-shadow: 1px 2px 2px rgba(0, 0, 0, 0.25);
`;

const ArrowWrap = styled.div`
  position: absolute;
  left: 77px;
  top: 370px;
  z-index: 7;
  line-height: 0;
`;

export default function App() {
  return (
    <>
      <Global />
      <Desktop>
        <WindowOne />
        <WindowTwo />
        <WindowThree />
        <Callout>
          Paying client
          <CalloutField>Solutions</CalloutField>
          <CalloutBtn><SearchIcon s={20} /></CalloutBtn>
          <CalloutBtn><FolderIcon s={20} /></CalloutBtn>
        </Callout>
        <ArrowWrap>
          <svg width="23" height="37" viewBox="0 0 23 37">
            <path d="M11.500 0L23 10H15V27H23L11.500 37L0 27H8V10H0z" fill="#2a5596" />
          </svg>
        </ArrowWrap>
        <RedRing />
        <Badge $x={28} $y={307}>1</Badge>
        <Badge $x={242} $y={638}>2</Badge>
        <Badge $x={587} $y={751}>2</Badge>
        <Badge $x={763} $y={642}>3</Badge>
      </Desktop>
    </>
  );
}
